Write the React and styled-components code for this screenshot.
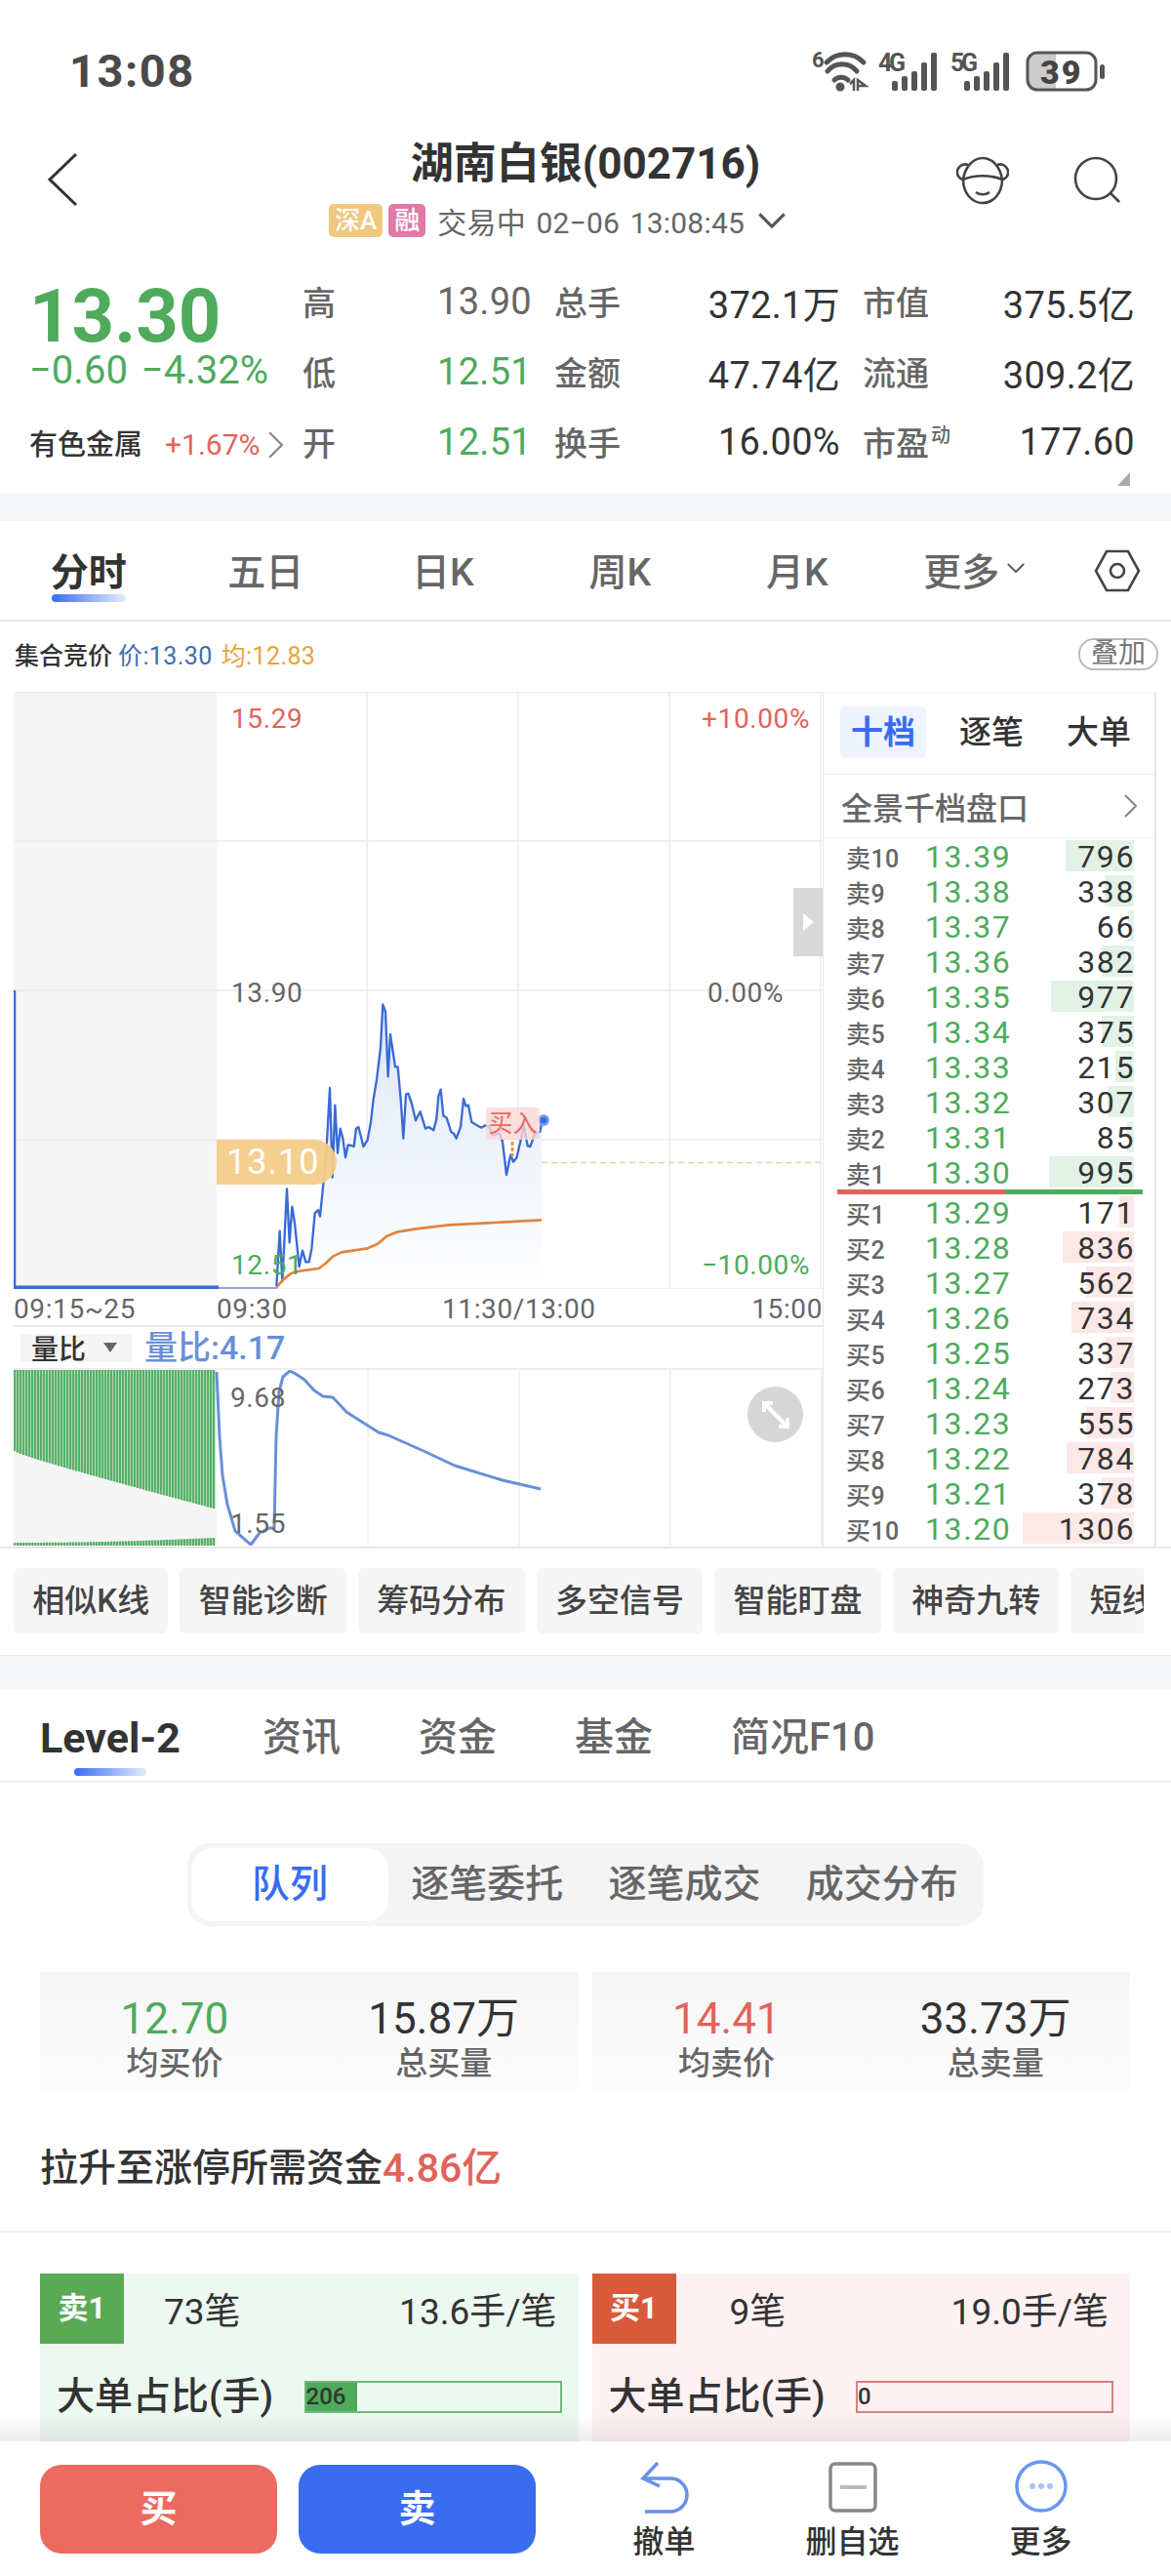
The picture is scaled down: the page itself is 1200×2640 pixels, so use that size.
import React from "react";
import styled, { createGlobalStyle } from "styled-components";

const GREEN = "#4dab5b";
const RED = "#e2635a";
const BLUE = "#3a6cf0";

const asks = [
  ["卖10", "13.39", 796],
  ["卖9", "13.38", 338],
  ["卖8", "13.37", 66],
  ["卖7", "13.36", 382],
  ["卖6", "13.35", 977],
  ["卖5", "13.34", 375],
  ["卖4", "13.33", 215],
  ["卖3", "13.32", 307],
  ["卖2", "13.31", 85],
  ["卖1", "13.30", 995],
];
const bids = [
  ["买1", "13.29", 171],
  ["买2", "13.28", 836],
  ["买3", "13.27", 562],
  ["买4", "13.26", 734],
  ["买5", "13.25", 337],
  ["买6", "13.24", 273],
  ["买7", "13.23", 555],
  ["买8", "13.22", 784],
  ["买9", "13.21", 378],
  ["买10", "13.20", 1306],
];

const stats = [
  ["高", "13.90", "#666"],
  ["总手", "372.1万"],
  ["市值", "375.5亿"],
  ["低", "12.51", GREEN],
  ["金额", "47.74亿"],
  ["流通", "309.2亿"],
  ["开", "12.51", GREEN],
  ["换手", "16.00%"],
  ["市盈", "177.60"],
];

// price line, in the coordinates of a 3x crop from (200,980)
const pricePoints =
  "250,1015 260,845 268,1000 282,715 290,880 298,770 306,820 320,955 330,905 340,940 350,940 358,900 368,790 378,780 384,800 395,690 405,570 414,405 422,680 430,458 438,605 446,530 454,560 462,618 470,580 480,582 488,585 495,530 502,525 510,555 517,585 530,565 540,510 548,440 558,380 570,280 577,148 585,170 593,370 600,240 615,340 623,340 632,440 640,560 648,425 655,422 665,450 678,505 692,478 708,530 718,525 733,535 742,500 748,430 755,410 763,490 773,497 787,540 795,545 803,560 816,525 825,438 832,460 840,458 850,510 870,522 880,527 892,520 905,525 915,550 935,545 945,570 957,672 970,610 978,632 988,620 1000,570 1010,520 1022,583 1030,585 1045,545 1060,540 1068,500";
const averagePoints =
  "250,1018 270,995 295,975 320,968 380,960 400,945 425,922 450,910 530,898 560,885 590,860 620,848 680,838 780,826 900,820 1065,811";
const ratioPoints =
  "222,1407 225,1473 228,1513 233,1543 241,1570 257,1584 266,1572 276,1567 281,1567 283,1473 286,1427 290,1412 297,1406 303,1409 312,1415 322,1426 331,1432 341,1433 355,1448 369,1457 388,1469 398,1472 434,1488 466,1503 515,1518 554,1527";

const ratioBars = Array.from({ length: 69 }, (_, i) => {
  const x = 15 + i * 3;
  const t = i / 68;
  return { x, end: 1488 + 59 * (t * 0.85 + 0.15 * Math.sqrt(t)), low: 1582 - 5 * t * t };
});

const GlobalStyle = createGlobalStyle`
  html, body {
    margin: 0;
    padding: 0;
    background: #fff;
  }
  body {
    font-family: Roboto, "Noto Sans CJK SC", sans-serif;
    color: #333;
  }
  * {
    box-sizing: border-box;
  }
`;

const Page = styled.div`
  width: 1200px;
  height: 2640px;
  display: flex;
  flex-direction: column;
  overflow: hidden;
`;

const Content = styled.div`
  flex: 1;
  min-height: 0;
  overflow: hidden;
`;

const StatusBar = styled.div`
  height: 130px;
  padding: 46px 65px 0 71px;
  display: flex;
  justify-content: space-between;
  align-items: flex-start;
`;

const Clock = styled.div`
  font-size: 47px;
  line-height: 54px;
  font-weight: 700;
  color: #4a4a4a;
  letter-spacing: 1.5px;
`;

const NavBar = styled.div`
  height: 142px;
  display: grid;
  grid-template-columns: 1fr auto 1fr;
  padding-top: 10px;
`;

const BackBox = styled.div`
  padding: 16px 0 0 48px;
`;

const NavCenter = styled.div`
  display: flex;
  flex-direction: column;
  align-items: center;
`;

const Title = styled.div`
  font-size: 44px;
  line-height: 56px;
  font-weight: 700;
  color: #333;
`;

const SubRow = styled.div`
  margin-top: 12px;
  margin-right: 58px;
  height: 36px;
  display: flex;
  align-items: center;
  font-size: 30px;
  white-space: nowrap;
  color: #666;
`;

const Tag = styled.span`
  height: 34px;
  padding: 0 6px;
  margin-right: 6px;
  background: ${(p) => p.$bg};
  border-radius: 5px;
  color: #fff;
  font-size: 26px;
  font-weight: 500;
  line-height: 34px;
`;

const SubText = styled.span`
  margin-left: 6px;
  letter-spacing: 0.2px;
  word-spacing: 3px;
`;

const SubChevron = styled.span`
  display: flex;
  margin-left: 14px;
`;

const NavIcons = styled.div`
  display: flex;
  justify-content: flex-end;
  gap: 66px;
  padding: 20px 50px 0 0;
`;

const Quote = styled.div`
  position: relative;
  height: 234px;
  display: grid;
  grid-template-columns: 280px 1fr;
  padding: 0 36px 18px 30px;
`;

const PriceBlock = styled.div`
  display: flex;
  flex-direction: column;
`;

const BigPrice = styled.div`
  margin-top: 18px;
  font-size: 76px;
  line-height: 68px;
  font-weight: 700;
  color: ${GREEN};
`;

const ChangeRow = styled.div`
  margin-top: 2px;
  display: flex;
  gap: 14px;
  font-size: 40px;
  line-height: 40px;
  white-space: nowrap;
  color: ${GREEN};
`;

const SectorRow = styled.div`
  margin-top: 36px;
  display: flex;
  align-items: center;
  font-size: 29px;
  font-weight: 500;
  line-height: 40px;
  white-space: nowrap;
  color: #333;
`;

const SectorChange = styled.span`
  margin-left: 23px;
  font-size: 30px;
  font-weight: 400;
  color: ${RED};
`;

const SectorChevron = styled.span`
  display: flex;
  margin-left: 8px;
`;

const StatGrid = styled.div`
  display: grid;
  grid-template-columns: 235px 293px 279px;
  column-gap: 23px;
  grid-auto-rows: 72px;
`;

const Stat = styled.div`
  display: flex;
  justify-content: space-between;
  align-items: center;
  font-size: 38px;
`;

const StatLabel = styled.span`
  font-size: 34px;
  font-weight: 500;
  color: #666;
`;

const Sup = styled.sup`
  font-size: 20px;
  line-height: 0;
  vertical-align: 14px;
  margin-left: 2px;
`;

const StatValue = styled.span`
  padding-top: 2px;
  color: ${(p) => p.$color || "#333"};
  letter-spacing: 0.3px;
`;

const CornerMark = styled.div`
  position: absolute;
  right: 42px;
  bottom: 8px;
  width: 0;
  height: 0;
  border-left: 13px solid transparent;
  border-bottom: 14px solid #aaa;
`;

const Band = styled.div`
  height: ${(p) => p.$height}px;
  background: #f5f6f7;
  border-top: ${(p) => (p.$line ? "1px solid #ebebeb" : "none")};
`;

const ChartTabs = styled.div`
  height: 103px;
  display: grid;
  grid-template-columns: repeat(6, 181.5px) 1fr;
  align-items: center;
  border-bottom: 2px solid #eaeaea;
  padding-bottom: 4px;
`;

const Tab = styled.div`
  position: relative;
  display: flex;
  justify-content: center;
  align-items: center;
  gap: 8px;
  font-size: 39px;
  font-weight: ${(p) => (p.$active ? 700 : 500)};
  color: ${(p) => (p.$active ? "#333" : "#666")};
`;

const Underline = styled.div`
  position: absolute;
  left: 50%;
  transform: translateX(-50%);
  bottom: ${(p) => p.$bottom}px;
  width: ${(p) => p.$width}px;
  height: 8px;
  border-radius: 4px;
  background: linear-gradient(90deg, ${BLUE}, #e4ecfc);
`;

const HexBox = styled.div`
  display: flex;
  justify-content: center;
  padding-top: 4px;
`;

const AuctionRow = styled.div`
  height: 72px;
  padding: 0 13px 6px 15px;
  display: flex;
  align-items: center;
  font-size: 25px;
`;

const AuctionText = styled.span`
  margin-right: ${(p) => p.$gap}px;
  color: ${(p) => p.$color};
  font-weight: ${(p) => p.$weight || 400};
  letter-spacing: ${(p) => (p.$weight ? 0 : 0.4)}px;
`;

const OverlayButton = styled.div`
  margin-left: auto;
  width: 82px;
  height: 33px;
  border: 2px solid #bbb;
  border-radius: 16px;
  font-size: 28px;
  line-height: 28px;
  text-align: center;
  color: #777;
`;

const MainRow = styled.div`
  display: grid;
  grid-template-columns: 829px 342px;
  padding-left: 14px;
  height: 878px;
  border-bottom: 2px solid #e8e8e8;
`;

const LeftCol = styled.div`
  display: flex;
  flex-direction: column;
`;

const PriceChart = styled.div`
  position: relative;
  height: 612px;
  & > svg {
    display: block;
  }
`;

const ChartLabel = styled.span`
  position: absolute;
  top: ${(p) => p.$top}px;
  ${(p) => (p.$right !== undefined ? `right: ${p.$right}px;` : `left: ${p.$left}px;`)}
  font-size: ${(p) => p.$size || 28}px;
  line-height: 32px;
  letter-spacing: 0.6px;
  color: ${(p) => p.$color || "#666"};
`;

const CurrentPrice = styled.div`
  position: absolute;
  left: 208px;
  top: 459px;
  width: 123px;
  height: 46px;
  padding-left: 10px;
  background: #f5cd8a;
  opacity: 0.95;
  border-radius: 0 23px 23px 0;
  color: #fff;
  font-size: 36px;
  line-height: 46px;
  letter-spacing: 1px;
`;

const BuyMark = styled.div`
  position: absolute;
  left: 484px;
  top: 426px;
  width: 55px;
  height: 33px;
  border-radius: 4px;
  background: rgba(250, 215, 215, 0.8);
  color: #e66a60;
  font-size: 25px;
  line-height: 33px;
  text-align: center;
`;

const SideHandle = styled.div`
  position: absolute;
  right: 0;
  top: 201px;
  width: 30px;
  height: 70px;
  background: #d8d8d8;
  display: flex;
  align-items: center;
  justify-content: center;
  &::after {
    content: "";
    border-left: 11px solid #fff;
    border-top: 9px solid transparent;
    border-bottom: 9px solid transparent;
  }
`;

const TimeAxis = styled.div`
  height: 39px;
  padding-top: 4px;
  display: grid;
  grid-template-columns: 208px 231px 1fr auto;
  align-items: center;
  font-size: 28px;
  letter-spacing: 0.6px;
  color: #666;
  border-bottom: 2px solid #eaeaea;
`;

const VolumeHead = styled.div`
  height: 44px;
  padding-left: 7px;
  display: flex;
  align-items: center;
  border-bottom: 2px solid #eeeeee;
`;

const VolumeSelect = styled.div`
  width: 114px;
  height: 29px;
  padding-left: 11px;
  display: flex;
  align-items: center;
  gap: 18px;
  background: #f5f5f5;
  font-size: 28px;
  font-weight: 500;
  color: #333;
  &::after {
    content: "";
    border-top: 10px solid #666;
    border-left: 7px solid transparent;
    border-right: 7px solid transparent;
  }
`;

const VolumeValue = styled.span`
  margin-left: 13px;
  font-size: 34px;
  line-height: 40px;
  font-weight: 500;
  color: #6a8fd8;
`;

const VolumeChart = styled.div`
  position: relative;
  height: 180px;
  & > svg {
    display: block;
  }
`;

const ExpandButton = styled.div`
  position: absolute;
  left: 752px;
  top: 17px;
  width: 57px;
  height: 57px;
  border-radius: 50%;
  background: #d6d6d6;
  display: flex;
  align-items: center;
  justify-content: center;
`;

const BookPanel = styled.div`
  border-left: 1px solid #e8e8e8;
  border-right: 2px solid #e8e8e8;
  border-top: 1px solid #eeeeee;
`;

const BookTabs = styled.div`
  height: 84px;
  padding: 0 0 2px 17px;
  display: flex;
  align-items: center;
  border-bottom: 1px solid #eeeeee;
  font-size: 33px;
  font-weight: 500;
`;

const BookTab = styled.div`
  flex: none;
  white-space: nowrap;
  width: ${(p) => (p.$active ? "88px" : "auto")};
  height: 53px;
  margin-left: ${(p) => p.$left || 0}px;
  line-height: 53px;
  text-align: center;
  border-radius: 6px;
  background: ${(p) => (p.$active ? "#eef3fd" : "transparent")};
  color: ${(p) => (p.$active ? BLUE : "#333")};
  font-weight: ${(p) => (p.$active ? 700 : 500)};
`;

const BookLink = styled.div`
  height: 65px;
  padding: 0 18px 0 18px;
  display: flex;
  justify-content: space-between;
  align-items: center;
  border-bottom: 1px solid #eeeeee;
  font-size: 32px;
  font-weight: 500;
  color: #666;
`;

const BookRow = styled.div`
  position: relative;
  height: 36px;
  padding: 0 22px 0 23px;
  display: grid;
  grid-template-columns: 81px 1fr auto;
  align-items: center;
`;

const BookLabel = styled.span`
  position: relative;
  font-size: 25px;
  font-weight: 500;
  letter-spacing: 0.4px;
  color: #666;
`;

const BookPrice = styled.span`
  position: relative;
  font-size: 32px;
  letter-spacing: 1.6px;
  color: ${GREEN};
`;

const BookVolume = styled.span`
  position: relative;
  font-size: 32px;
  letter-spacing: 1.6px;
  margin-right: -2px;
  color: #333;
`;

const BookBar = styled.div`
  position: absolute;
  right: 21px;
  top: 2px;
  bottom: 2px;
  background: ${(p) => p.$color};
`;

const BookDivider = styled.div`
  margin: 0 12px 0 14px;
  height: 5px;
  background: linear-gradient(90deg, ${RED} 55%, ${GREEN} 55%);
`;

const ChipRow = styled.div`
  margin-right: 28px;
  padding: 20px 0 22px 14px;
  display: flex;
  gap: 12px;
  overflow: hidden;
`;

const Chip = styled.div`
  flex: none;
  height: 67px;
  padding: 0 19.3px;
  border-radius: 6px;
  background: #f5f5f5;
  font-size: 33px;
  font-weight: 500;
  line-height: 67px;
  color: #444;
`;

const InfoTabs = styled.div`
  height: 95px;
  padding: 4px 0 0 41px;
  display: flex;
  align-items: center;
  gap: 80px;
  border-bottom: 2px solid #efefef;
`;

const InfoTab = styled.div`
  position: relative;
  margin-right: ${(p) => (p.$active ? 4 : 0)}px;
  font-size: ${(p) => (p.$active ? 43 : 40)}px;
  line-height: 50px;
  font-weight: ${(p) => (p.$active ? 700 : 500)};
  color: ${(p) => (p.$active ? "#333" : "#666")};
`;

const Segment = styled.div`
  margin: 62px auto 0;
  width: 816px;
  height: 85px;
  padding: 5px 3px 5px 4px;
  display: grid;
  grid-template-columns: repeat(4, 1fr);
  background: #f4f4f5;
  border-radius: 24px;
`;

const SegmentItem = styled.div`
  border-radius: 22px;
  background: ${(p) => (p.$active ? "#fff" : "transparent")};
  color: ${(p) => (p.$active ? BLUE : "#666")};
  font-size: 39px;
  font-weight: 500;
  line-height: 75px;
  text-align: center;
`;

const TwoCols = styled.div`
  margin-top: ${(p) => p.$top}px;
  padding: 0 42px 0 41px;
  display: grid;
  grid-template-columns: 1fr 1fr;
  gap: 14px;
`;

const SumCard = styled.div`
  height: 123px;
  display: grid;
  grid-template-columns: 1fr 1fr;
  background: linear-gradient(180deg, #f5f5f5, #fdfdfd);
`;

const SumCell = styled.div`
  display: flex;
  flex-direction: column;
  align-items: center;
  padding-top: 26px;
`;

const SumValue = styled.div`
  font-size: 44px;
  line-height: 44px;
  color: ${(p) => p.$color || "#333"};
`;

const SumLabel = styled.div`
  margin-top: 3px;
  font-size: 33px;
  font-weight: 500;
  line-height: 42px;
  color: #666;
`;

const LimitRow = styled.div`
  height: 144px;
  padding: 6px 0 0 41px;
  display: flex;
  align-items: center;
  font-size: 39px;
  font-weight: 500;
  color: #333;
  border-bottom: 2px solid #efefef;
`;

const LimitValue = styled.span`
  font-size: 41px;
  color: ${RED};
`;

const DepthCard = styled.div`
  height: 200px;
  background: ${(p) => p.$bg};
`;

const DepthHead = styled.div`
  height: 72px;
  display: flex;
  align-items: center;
  font-size: 37px;
  color: #333;
`;

const DepthBadge = styled.div`
  width: 86px;
  height: 72px;
  background: ${(p) => p.$bg};
  color: #fff;
  font-size: 31px;
  font-weight: 700;
  line-height: 72px;
  text-align: center;
`;

const DepthCount = styled.span`
  margin-left: ${(p) => p.$left}px;
`;

const DepthAvg = styled.span`
  margin-left: auto;
  margin-right: ${(p) => p.$right}px;
`;

const DepthRatio = styled.div`
  margin-top: 28px;
  padding: 0 17px;
  display: flex;
  justify-content: space-between;
  align-items: center;
  font-size: 39px;
  line-height: 52px;
  font-weight: 500;
  color: #333;
`;

const RatioTrack = styled.div`
  width: 264px;
  height: 33px;
  border: 2px solid ${(p) => p.$color};
  display: flex;
`;

const RatioFill = styled.div`
  background: ${(p) => p.$color};
  font-size: 24px;
  font-weight: 500;
  line-height: 29px;
  color: #333;
`;

const Footer = styled.div`
  position: relative;
  flex: none;
  height: 138px;
  padding: 24px 0 0 41px;
  display: flex;
  background: #fff;
  &::before {
    content: "";
    position: absolute;
    left: 0;
    right: 0;
    top: -28px;
    height: 28px;
    background: linear-gradient(180deg, rgba(0, 0, 0, 0), rgba(0, 0, 0, 0.07));
  }
`;

const TradeButton = styled.div`
  width: 243px;
  height: 91px;
  margin-right: 22px;
  border-radius: 22px;
  background: ${(p) => p.$bg};
  color: #fff;
  font-size: 38px;
  font-weight: 700;
  line-height: 91px;
  text-align: center;
`;

const Actions = styled.div`
  margin-left: 13px;
  display: grid;
  grid-template-columns: repeat(3, 193px);
`;

const Action = styled.div`
  margin-top: -5px;
  display: flex;
  flex-direction: column;
  align-items: center;
  font-size: 32px;
  line-height: 44px;
  font-weight: 500;
  color: #333;
  & > svg {
    display: block;
    margin-bottom: 6px;
  }
`;

const StatusIcons = () => (
  <svg width="305" height="55" viewBox="830 45 305 55" fill="none">
    <text x="832" y="68" fontFamily="Roboto, sans-serif" fontWeight="700" fontSize="22" fill="#555">
      6
    </text>
    <g stroke="#555" strokeWidth="5" strokeLinecap="round">
      <path d="M847 63 A26 26 0 0 1 885 63" />
      <path d="M847 72 A19 19 0 0 1 877 72" transform="translate(1 0)" />
      <path d="M855 81 A10 10 0 0 1 869 81" />
    </g>
    <circle cx="861" cy="88" r="4.5" fill="#555" />
    <path d="M875 92 V81 L871 85 M879 92 V81 L887 87 H880" stroke="#555" strokeWidth="2.5" />
    <text x="900" y="72" fontFamily="Roboto, sans-serif" fontWeight="700" fontSize="25" fill="#555" textLength="28">
      4G
    </text>
    <g fill="#555">
      <rect x="914" y="82" width="6" height="10" rx="2" />
      <rect x="924" y="77" width="6" height="15" rx="2" />
      <rect x="934" y="72" width="6" height="20" rx="2" />
      <rect x="944" y="63" width="6" height="29" rx="2" />
      <rect x="954" y="53" width="6" height="39" rx="2" />
    </g>
    <text x="974" y="72" fontFamily="Roboto, sans-serif" fontWeight="700" fontSize="25" fill="#555" textLength="28">
      5G
    </text>
    <g fill="#555">
      <rect x="988" y="82" width="6" height="10" rx="2" />
      <rect x="998" y="77" width="6" height="15" rx="2" />
      <rect x="1008" y="72" width="6" height="20" rx="2" />
      <rect x="1018" y="63" width="6" height="29" rx="2" />
      <rect x="1028" y="53" width="6" height="39" rx="2" />
    </g>
    <path d="M1062 54 H1082 V90 H1062 A8 8 0 0 1 1054 82 V62 A8 8 0 0 1 1062 54 Z" fill="#ccc" />
    <rect x="1053" y="53" width="70" height="38" rx="10" stroke="#555" strokeWidth="3" />
    <rect x="1127" y="65" width="5" height="15" rx="2.5" fill="#555" />
    <text x="1066" y="85" fontFamily="Roboto, sans-serif" fontWeight="900" fontSize="34" letterSpacing="2" fill="#444">
      39
    </text>
  </svg>
);

const BackIcon = () => (
  <svg width="32" height="56" viewBox="0 0 32 56" fill="none" stroke="#333" strokeWidth="3">
    <path d="M30 2 L3 28 L30 54" />
  </svg>
);

const FaceIcon = () => (
  <svg width="54" height="50" viewBox="0 0 54 50" fill="none" stroke="#444" strokeWidth="2.6">
    <path d="M7 24 C7 38 16 48 27 48 C38 48 47 38 47 24" />
    <path d="M7 24 C9 11 17 2 27 2 C37 2 45 11 47 24" />
    <path d="M7 24 C18 19 36 19 47 24" />
    <path d="M12 9 A8 8 0 0 0 6 24 M42 9 A8 8 0 0 1 48 24" />
    <path d="M20 37 C24 40 30 40 34 37" />
  </svg>
);

const SearchIcon = () => (
  <svg width="50" height="50" viewBox="0 0 50 50" fill="none" stroke="#444" strokeWidth="2.6">
    <circle cx="23" cy="23" r="21" />
    <path d="M38 38 L47 47" />
  </svg>
);

const DownChevron = ({ size = 22, color = "#555" }) => (
  <svg width={size} height={size * 0.6} viewBox="0 0 22 13" fill="none" stroke={color} strokeWidth="2.4">
    <path d="M1 1 L11 11 L21 1" />
  </svg>
);

const RightChevron = ({ width = 13, height = 24, color = "#888" }) => (
  <svg width={width} height={height} viewBox="0 0 13 24" fill="none" stroke={color} strokeWidth="2">
    <path d="M1 1 L12 12 L1 23" />
  </svg>
);

const HexIcon = () => (
  <svg width="48" height="46" viewBox="0 0 48 46" fill="none" stroke="#444" strokeWidth="2.6">
    <path d="M13 3 H35 L46 23 L35 43 H13 L2 23 Z" />
    <circle cx="24" cy="23" r="7" />
  </svg>
);

const ExpandIcon = () => (
  <svg width="34" height="34" viewBox="0 0 34 34" fill="none" stroke="#fff" strokeWidth="4">
    <path d="M5 14 V5 H14 M5 5 L29 29 M29 20 V29 H20" />
  </svg>
);

const PriceDrawing = () => (
  <svg width="829" height="612" viewBox="14 709 829 612" fill="none">
    <defs>
      <linearGradient id="priceFill" x1="0" y1="0" x2="0" y2="1">
        <stop offset="0" stopColor="#dce7f6" />
        <stop offset="1" stopColor="#ffffff" />
      </linearGradient>
    </defs>
    <rect x="14" y="709" width="208" height="612" fill="#f5f5f5" />
    <g stroke="#ececec" strokeWidth="1.5">
      <path d="M14 709.5 H843 M14 862 H843 M14 1015 H843 M14 1168 H843 M14 1321 H843" />
      <path d="M376 709 V1321 M531 709 V1321 M686 709 V1321 M841 709 V1321" />
    </g>
    <path d="M345 1191.5 H843" stroke="#f0cfa0" strokeWidth="1.5" strokeDasharray="6 4" />
    <g transform="translate(200 980) scale(0.33333)">
      <polygon points={`${pricePoints} 1065,500 1065,1020 250,1020`} fill="url(#priceFill)" />
      <polyline points={pricePoints} stroke="#3a6ad4" strokeWidth="7" strokeLinejoin="round" />
      <polyline points={averagePoints} stroke="#e2833f" strokeWidth="8" strokeLinejoin="round" />
    </g>
    <path d="M15 1015 V1320" stroke="#3a6ad4" strokeWidth="2.5" />
    <path d="M14 1319.5 H224" stroke="#3a6ad4" strokeWidth="4" />
    <path d="M224 1320 H284" stroke="#8fa6dd" strokeWidth="2" />
    <path d="M525 1170 V1185" stroke="#d99a50" strokeWidth="3" strokeDasharray="4 2" />
    <circle cx="557" cy="1148" r="6" fill="#7ea3ec" />
    <circle cx="557" cy="1148" r="3.5" fill="#3a6cf0" />
  </svg>
);

const RatioDrawing = () => (
  <svg width="829" height="180" viewBox="14 1405 829 180" fill="none">
    <rect x="14" y="1405" width="208" height="180" fill="#f5f5f5" />
    <path d="M377 1405 V1585 M532 1405 V1585 M687 1405 V1585 M842 1405 V1585" stroke="#eeeeee" strokeWidth="1.5" />
    <g stroke="#58b168" strokeWidth="2.5">
      {ratioBars.map((b) => (
        <path key={b.x} d={`M${b.x} 1405 V${b.end} M${b.x} ${b.low} V1585`} />
      ))}
    </g>
    <polyline points={ratioPoints} stroke="#6a8fd8" strokeWidth="3" strokeLinejoin="round" />
  </svg>
);

const UndoIcon = () => (
  <svg width="60" height="56" viewBox="0 0 60 56" fill="none" stroke="#6a8fe8" strokeWidth="3.5">
    <path d="M23 3 L8 19 L25 27" />
    <path d="M8 19 H36 A17 17 0 0 1 53 36 A17 17 0 0 1 36 53 H10" />
  </svg>
);

const WatchIcon = () => (
  <svg width="60" height="56" viewBox="0 0 60 56" fill="none">
    <rect x="7" y="4" width="46" height="48" rx="5" stroke="#888" strokeWidth="3.5" />
    <path d="M17 28 H44" stroke="#bbb" strokeWidth="4" />
  </svg>
);

const MoreIcon = () => (
  <svg width="60" height="56" viewBox="0 0 60 56" fill="none">
    <circle cx="30" cy="27" r="25" stroke="#6a97ee" strokeWidth="3.5" />
    <circle cx="21" cy="27" r="3" fill="#a9c2f3" />
    <circle cx="30" cy="27" r="3" fill="#a9c2f3" />
    <circle cx="39" cy="27" r="3" fill="#a9c2f3" />
  </svg>
);

const Row = ({ level, color }) => (
  <BookRow>
    <BookBar $color={color} style={{ width: level[2] * 0.0875 }} />
    <BookLabel>{level[0]}</BookLabel>
    <BookPrice>{level[1]}</BookPrice>
    <BookVolume>{level[2]}</BookVolume>
  </BookRow>
);

const App = () => (
  <Page>
    <GlobalStyle />
    <Content>
      <StatusBar>
        <Clock>13:08</Clock>
        <StatusIcons />
      </StatusBar>

      <NavBar>
        <BackBox>
          <BackIcon />
        </BackBox>
        <NavCenter>
          <Title>湖南白银(002716)</Title>
          <SubRow>
            <Tag $bg="#f0c87e">深A</Tag>
            <Tag $bg="#e07aa8">融</Tag>
            <SubText>交易中 02−06 13:08:45</SubText>
            <SubChevron>
              <DownChevron size={28} />
            </SubChevron>
          </SubRow>
        </NavCenter>
        <NavIcons>
          <FaceIcon />
          <SearchIcon />
        </NavIcons>
      </NavBar>

      <Quote>
        <PriceBlock>
          <BigPrice>13.30</BigPrice>
          <ChangeRow>
            <span>−0.60</span>
            <span>−4.32%</span>
          </ChangeRow>
          <SectorRow>
            有色金属
            <SectorChange>+1.67%</SectorChange>
            <SectorChevron>
              <RightChevron width={15} height={28} />
            </SectorChevron>
          </SectorRow>
        </PriceBlock>
        <StatGrid>
          {stats.map(([label, value, color]) => (
            <Stat key={label}>
              <StatLabel>
                {label}
                {label === "市盈" && <Sup>动</Sup>}
              </StatLabel>
              <StatValue $color={color}>{value}</StatValue>
            </Stat>
          ))}
        </StatGrid>
        <CornerMark />
      </Quote>

      <Band $height={28} />

      <ChartTabs>
        <Tab $active>
          分时
          <Underline $width={76} $bottom={-6} />
        </Tab>
        <Tab>五日</Tab>
        <Tab>日K</Tab>
        <Tab>周K</Tab>
        <Tab>月K</Tab>
        <Tab>
          更多
          <DownChevron size={18} />
        </Tab>
        <HexBox>
          <HexIcon />
        </HexBox>
      </ChartTabs>

      <AuctionRow>
        <AuctionText $color="#333" $weight={500} $gap={6}>
          集合竞价
        </AuctionText>
        <AuctionText $color="#3d6fb0" $gap={9}>
          价:13.30
        </AuctionText>
        <AuctionText $color="#e8a33d">均:12.83</AuctionText>
        <OverlayButton>叠加</OverlayButton>
      </AuctionRow>

      <MainRow>
        <LeftCol>
          <PriceChart>
            <PriceDrawing />
            <ChartLabel $left={223} $top={12} $color={RED}>
              15.29
            </ChartLabel>
            <ChartLabel $left={223} $top={293}>
              13.90
            </ChartLabel>
            <ChartLabel $left={223} $top={572} $color={GREEN}>
              12.51
            </ChartLabel>
            <ChartLabel $right={13} $top={12} $color={RED}>
              +10.00%
            </ChartLabel>
            <ChartLabel $right={40} $top={293}>
              0.00%
            </ChartLabel>
            <ChartLabel $right={13} $top={572} $color={GREEN}>
              −10.00%
            </ChartLabel>
            <CurrentPrice>13.10</CurrentPrice>
            <BuyMark>买入</BuyMark>
            <SideHandle />
          </PriceChart>
          <TimeAxis>
            <span>09:15~25</span>
            <span>09:30</span>
            <span>11:30/13:00</span>
            <span>15:00</span>
          </TimeAxis>
          <VolumeHead>
            <VolumeSelect>量比</VolumeSelect>
            <VolumeValue>量比:4.17</VolumeValue>
          </VolumeHead>
          <VolumeChart>
            <RatioDrawing />
            <ChartLabel $left={222} $top={13}>
              9.68
            </ChartLabel>
            <ChartLabel $left={222} $top={142}>
              1.55
            </ChartLabel>
            <ExpandButton>
              <ExpandIcon />
            </ExpandButton>
          </VolumeChart>
        </LeftCol>

        <BookPanel>
          <BookTabs>
            <BookTab $active>十档</BookTab>
            <BookTab $left={34}>逐笔</BookTab>
            <BookTab $left={44}>大单</BookTab>
          </BookTabs>
          <BookLink>
            全景千档盘口
            <RightChevron />
          </BookLink>
          {asks.map((level) => (
            <Row key={level[0]} level={level} color="#e2f2e6" />
          ))}
          <BookDivider />
          {bids.map((level) => (
            <Row key={level[0]} level={level} color="#fbe8e7" />
          ))}
        </BookPanel>
      </MainRow>

      <ChipRow>
        <Chip>相似K线</Chip>
        <Chip>智能诊断</Chip>
        <Chip>筹码分布</Chip>
        <Chip>多空信号</Chip>
        <Chip>智能盯盘</Chip>
        <Chip>神奇九转</Chip>
        <Chip>短线</Chip>
      </ChipRow>

      <Band $height={36} $line />

      <InfoTabs>
        <InfoTab $active>
          Level-2
          <Underline $width={74} $bottom={-14} />
        </InfoTab>
        <InfoTab>资讯</InfoTab>
        <InfoTab>资金</InfoTab>
        <InfoTab>基金</InfoTab>
        <InfoTab>简况F10</InfoTab>
      </InfoTabs>

      <Segment>
        <SegmentItem $active>队列</SegmentItem>
        <SegmentItem>逐笔委托</SegmentItem>
        <SegmentItem>逐笔成交</SegmentItem>
        <SegmentItem>成交分布</SegmentItem>
      </Segment>

      <TwoCols $top={47}>
        <SumCard>
          <SumCell>
            <SumValue $color={GREEN}>12.70</SumValue>
            <SumLabel>均买价</SumLabel>
          </SumCell>
          <SumCell>
            <SumValue>15.87万</SumValue>
            <SumLabel>总买量</SumLabel>
          </SumCell>
        </SumCard>
        <SumCard>
          <SumCell>
            <SumValue $color={RED}>14.41</SumValue>
            <SumLabel>均卖价</SumLabel>
          </SumCell>
          <SumCell>
            <SumValue>33.73万</SumValue>
            <SumLabel>总卖量</SumLabel>
          </SumCell>
        </SumCard>
      </TwoCols>

      <LimitRow>
        拉升至涨停所需资金<LimitValue>4.86亿</LimitValue>
      </LimitRow>

      <TwoCols $top={42}>
        <DepthCard $bg="#edf8f0">
          <DepthHead>
            <DepthBadge $bg="#5aa955">卖1</DepthBadge>
            <DepthCount $left={41}>73笔</DepthCount>
            <DepthAvg $right={22}>13.6手/笔</DepthAvg>
          </DepthHead>
          <DepthRatio>
            大单占比(手)
            <RatioTrack $color="#6fb87a">
              <RatioFill $color={GREEN} style={{ width: 52 }}>
                206
              </RatioFill>
            </RatioTrack>
          </DepthRatio>
        </DepthCard>
        <DepthCard $bg="#fdf1f1">
          <DepthHead>
            <DepthBadge $bg="#d95a3a">买1</DepthBadge>
            <DepthCount $left={55}>9笔</DepthCount>
            <DepthAvg $right={22}>19.0手/笔</DepthAvg>
          </DepthHead>
          <DepthRatio>
            大单占比(手)
            <RatioTrack $color="#d98080">
              <RatioFill $color="transparent">0</RatioFill>
            </RatioTrack>
          </DepthRatio>
        </DepthCard>
      </TwoCols>
    </Content>

    <Footer>
      <TradeButton $bg="#ec6a60">买</TradeButton>
      <TradeButton $bg={BLUE}>卖</TradeButton>
      <Actions>
        <Action>
          <UndoIcon />
          撤单
        </Action>
        <Action>
          <WatchIcon />
          删自选
        </Action>
        <Action>
          <MoreIcon />
          更多
        </Action>
      </Actions>
    </Footer>
  </Page>
);

export default App;
